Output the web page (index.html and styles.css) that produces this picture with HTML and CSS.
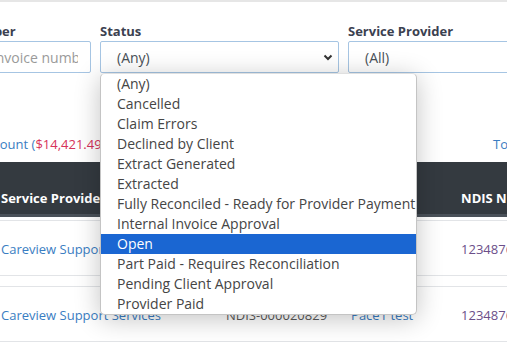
FILE: index.html
```html
<!DOCTYPE html>
<html>

<head>
    <title>Invoices</title>
    <link rel="stylesheet" href="styles.css">
</head>

<body>
    <div class="topbar"></div>
    <div class="page">
        <div class="filters">
            <div class="field field-invoice">
                <label>Invoice Number</label>
                <input class="control" type="text" placeholder="Search by invoice number" />
            </div>
            <div class="field field-status">
                <label>Status</label>
                <div class="control select">
                    <span>(Any)</span>
                    <svg class="chevron" width="10" height="7" viewBox="0 0 10 7">
                        <polyline points="1.5,1.5 5,5 8.5,1.5" fill="none" stroke="#333" stroke-width="2" />
                    </svg>
                </div>
                <ul class="options">
                    <li>(Any)</li>
                    <li>Cancelled</li>
                    <li>Claim Errors</li>
                    <li>Declined by Client</li>
                    <li>Extract Generated</li>
                    <li>Extracted</li>
                    <li>Fully Reconciled - Ready for Provider Payment</li>
                    <li>Internal Invoice Approval</li>
                    <li class="selected">Open</li>
                    <li>Part Paid - Requires Reconciliation</li>
                    <li>Pending Client Approval</li>
                    <li>Provider Paid</li>
                </ul>
            </div>
            <div class="field field-provider">
                <label>Service Provider</label>
                <div class="control select">
                    <span>(All)</span>
                </div>
            </div>
        </div>

        <div class="summary">
            <span class="link">Total Amount (<span class="amount">$14,421.49</span>)</span>
            <span class="link">Total Invoices: 2</span>
        </div>

        <table class="invoices">
            <colgroup>
                <col style="width: 225px">
                <col style="width: 123px">
                <col style="width: 110px">
                <col style="width: 160px">
            </colgroup>
            <thead>
                <tr>
                    <th>Service Provider</th>
                    <th>Claim No.</th>
                    <th>Client</th>
                    <th>NDIS Number</th>
                </tr>
            </thead>
            <tbody>
                <tr>
                    <td class="link">Careview Support Services</td>
                    <td class="muted">NDIS-000020830</td>
                    <td class="link">Pace1 test</td>
                    <td class="ndis">1234876</td>
                </tr>
                <tr class="spacer">
                    <td colspan="4"></td>
                </tr>
                <tr>
                    <td class="link">Careview Support Services</td>
                    <td class="muted">NDIS-000020829</td>
                    <td class="link">Pace1 test</td>
                    <td class="ndis">1234876</td>
                </tr>
            </tbody>
        </table>
    </div>
</body>

</html>
```

FILE: styles.css
```css
body {
    margin: 0;
    padding: 0;
    font-family: "Open Sans", sans-serif;
    background-color: #fff;
    overflow: hidden;
}

.topbar {
    height: 2px;
    background-color: #e6e6e6;
}

.page {
    margin-left: -88px;
    width: 900px;
}

.filters {
    display: flex;
    gap: 9px;
    padding-top: 20px;
}

.field {
    position: relative;
    display: flex;
    flex-direction: column;
}

.field-invoice {
    width: 179px;
}

.field-status,
.field-provider {
    width: 239px;
}

.field label {
    font-size: 13px;
    font-weight: 700;
    line-height: 18px;
    color: #3b4150;
    margin-bottom: 1px;
}

.control {
    box-sizing: border-box;
    height: 32px;
    border: 1px solid #a6c5e3;
    border-radius: 2px;
    padding: 0 12px;
    font-family: "Open Sans", sans-serif;
    font-size: 14px;
    color: #495057;
    background-color: #fff;
}

.control::placeholder {
    color: #9a9a9a;
}

.select {
    display: flex;
    align-items: center;
    justify-content: space-between;
    padding-left: 16px;
    padding-right: 5px;
}

.options {
    position: absolute;
    top: 100%;
    left: 0;
    width: 317px;
    margin: 0;
    padding: 0;
    list-style: none;
    box-sizing: border-box;
    background-color: #fff;
    border: 1px solid #c4c4c4;
    border-top-color: #e0e0e0;
    border-radius: 5px;
    box-shadow: 0 4px 26px rgba(0, 0, 0, 0.24);
    z-index: 10;
}

.options li {
    height: 20px;
    line-height: 20px;
    padding-left: 16px;
    font-size: 14px;
    color: #454545;
    white-space: nowrap;
}

.options li.selected {
    background-color: #1a66d2;
    color: #fff;
}

.summary {
    display: grid;
    grid-template-columns: 547px auto;
    padding-left: 34px;
    margin-top: 61px;
    font-size: 13px;
    line-height: 20px;
}

.link {
    color: #3a7dc2;
}

.amount {
    color: #d6335a;
}

.invoices {
    margin-top: 8px;
    margin-left: 77px;
    border-collapse: separate;
    border-spacing: 0;
    table-layout: fixed;
    font-size: 13px;
}

.invoices th {
    text-align: left;
    vertical-align: bottom;
    padding: 27px 12px 10px;
    line-height: 18px;
    font-weight: 700;
    color: #fff;
    background-color: #343a40;
    box-shadow: inset 0 -3px 0 #4a5159;
    border-bottom: 3px solid #fff;
    white-space: nowrap;
}

.invoices td {
    padding: 18px 12px 16px;
    line-height: 20px;
    border-top: 1px solid #e2e4e7;
    white-space: nowrap;
}

.invoices tbody tr:last-child td {
    border-bottom: 1px solid #e2e4e7;
}

.invoices .spacer td {
    height: 10px;
    padding: 0;
}

.muted {
    color: #5a5a5a;
}

.ndis {
    color: #6b4f8a;
}
```
